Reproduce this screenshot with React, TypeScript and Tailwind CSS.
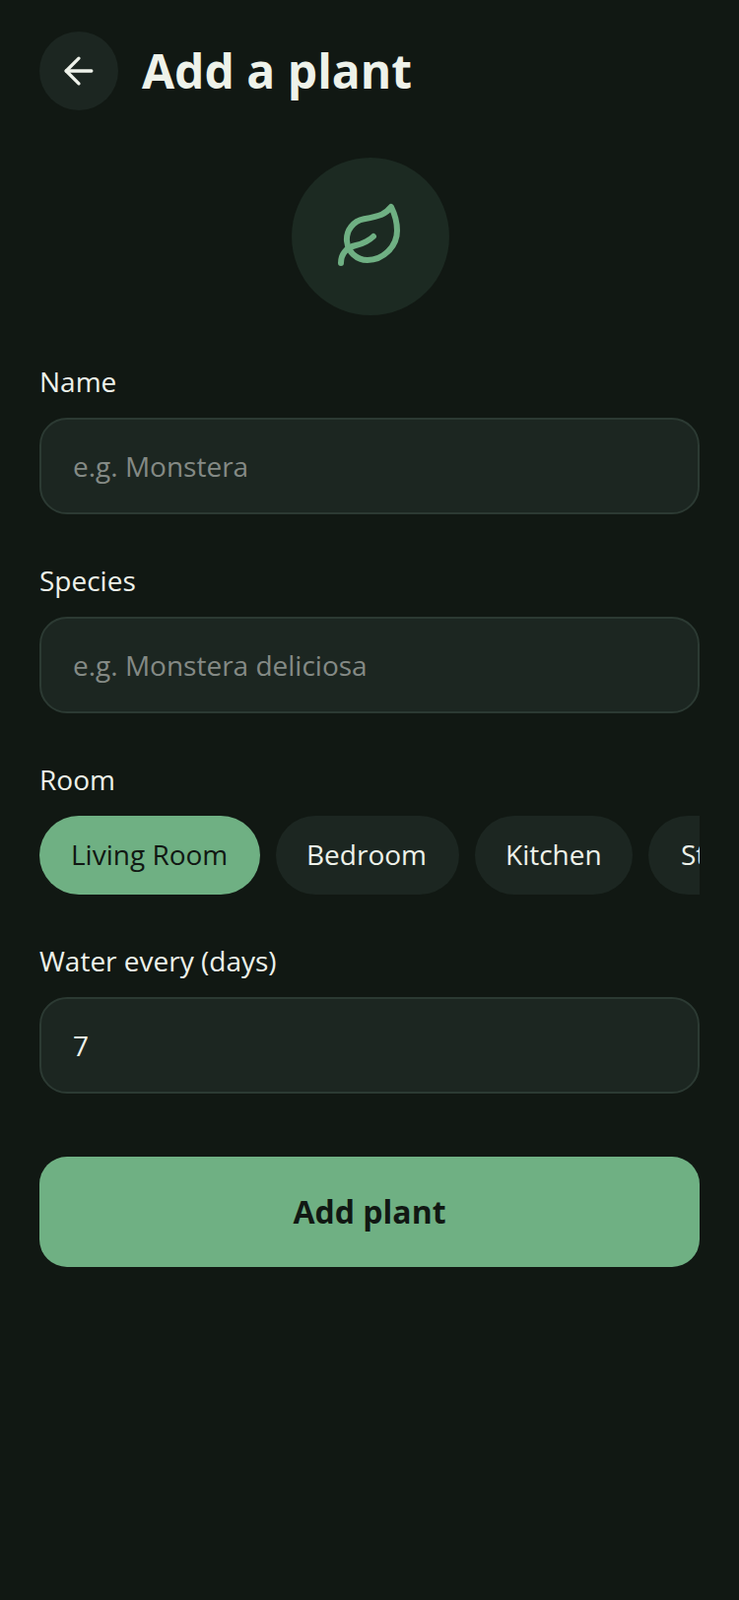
import { ArrowLeft, Leaf } from "lucide-react";

const rooms = [
  { name: "Living Room", box: "w-[224px] pl-8" },
  { name: "Bedroom", box: "w-[186px] pl-[31px]" },
  { name: "Kitchen", box: "w-[160px] pl-[31px]" },
  { name: "Study", box: "w-[140px] pl-[33px]" },
];

function Field({ label, placeholder, value }: { label: string; placeholder?: string; value?: string }) {
  return (
    <div>
      <label className="block text-[28px] leading-[38px] text-[#eef2ea]">{label}</label>
      <input
        readOnly
        placeholder={placeholder}
        value={value ?? ""}
        className="mt-[18px] block h-[98px] w-full rounded-[28px] border-2 border-[#2c3a33] bg-[#1c2621] px-8 text-[28px] text-[#eef2ea] outline-none placeholder:text-[#848a85]"
      />
    </div>
  );
}

export default function App() {
  return (
    <div
      className="min-h-[1624px] bg-[#111813] px-10 pt-8"
      style={{ fontFamily: '"Open Sans", sans-serif' }}
    >
      <header className="flex items-center gap-6">
        <button type="button" className="flex h-20 w-20 items-center justify-center rounded-full bg-[#1c2621] text-[#eef2ea]">
          <ArrowLeft size={44} strokeWidth={1.8} />
        </button>
        <h1 className="text-[48px] font-bold leading-[64px] text-[#eef2ea]">Add a plant</h1>
      </header>

      <div className="mt-12 flex justify-center">
        <div className="flex h-40 w-40 translate-x-px items-center justify-center rounded-full bg-[#1c2a22] text-[#6fb083]">
          <Leaf size={72} strokeWidth={2} />
        </div>
      </div>

      <div className="mt-12 flex flex-col gap-12">
        <Field label="Name" placeholder="e.g. Monstera" />
        <Field label="Species" placeholder="e.g. Monstera deliciosa" />
      </div>

      <div className="mt-12">
        <p className="text-[28px] leading-[38px] text-[#eef2ea]">Room</p>
        <div className="mt-[18px] flex gap-4 overflow-hidden">
          {rooms.map((room, i) => (
            <span
              key={room.name}
              className={`flex h-20 shrink-0 items-center rounded-full pb-0.5 text-[28px] ${room.box} ${
                i === 0 ? "bg-[#6fb083] text-[#111813]" : "bg-[#1c2621] text-[#eef2ea]"
              }`}
            >
              {room.name}
            </span>
          ))}
        </div>
      </div>

      <div className="mt-12">
        <Field label="Water every (days)" value="7" />
      </div>

      <button
        type="button"
        className="mt-16 block h-28 w-full rounded-[28px] bg-[#6fb083] text-[32px] font-bold text-[#111813]"
      >
        Add plant
      </button>
    </div>
  );
}
